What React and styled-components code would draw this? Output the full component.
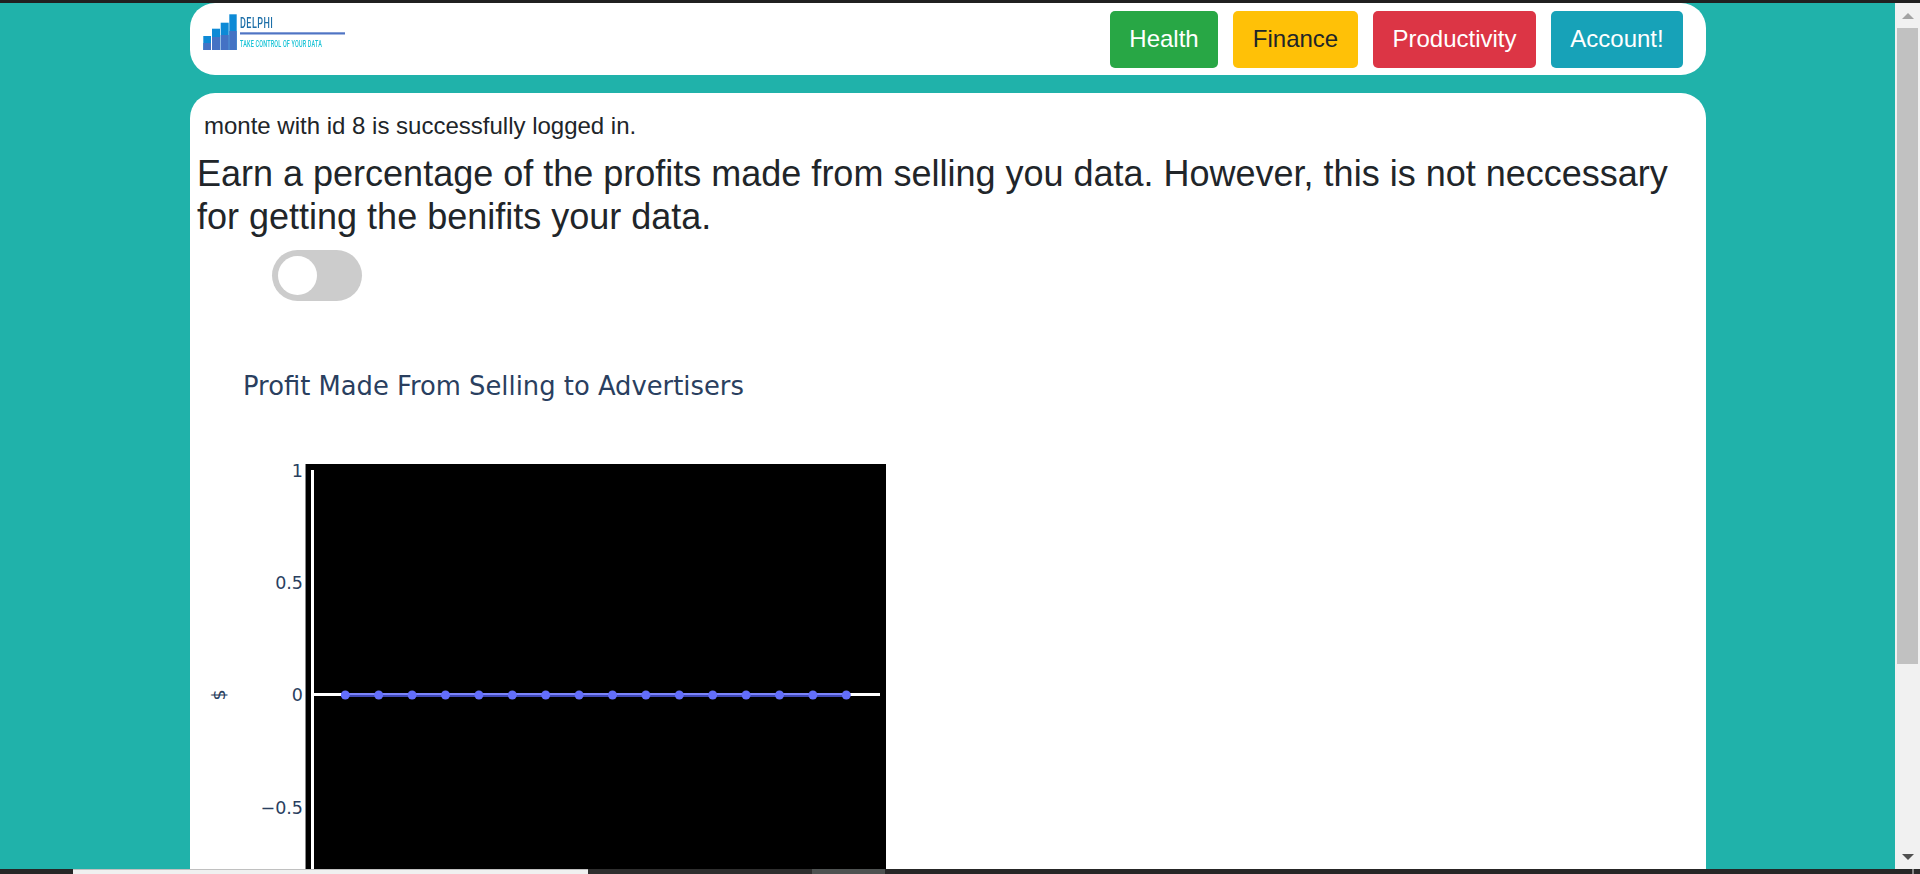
import React from "react";
import styled, { createGlobalStyle } from "styled-components";

const GlobalStyle = createGlobalStyle`
  html, body {
    margin: 0;
    height: 100%;
    overflow: hidden;
  }
  body {
    font-family: "Liberation Sans", Arial, sans-serif;
    color: #212529;
  }
`;

const Screen = styled.div`
  height: 874px;
  display: flex;
  flex-direction: column;
  background: #202020;
`;

const WindowRow = styled.div`
  flex: 1;
  min-height: 0;
  display: flex;
  margin-top: 3px;
`;

const Page = styled.main`
  flex: 1;
  min-width: 0;
  overflow: hidden;
  background: #20b2aa;
  padding: 0 189px 0 190px;
`;

const Navbar = styled.nav`
  height: 72px;
  background: #fff;
  border-radius: 25px;
  display: flex;
  align-items: flex-start;
  justify-content: space-between;
  padding: 8px 23px 0 13px;
  box-sizing: border-box;
`;

const Buttons = styled.div`
  display: flex;
  gap: 15px;
`;

const NavButton = styled.a`
  height: 57px;
  box-sizing: border-box;
  display: flex;
  align-items: center;
  justify-content: center;
  padding-bottom: 2px;
  width: ${(p) => p.$width}px;
  border-radius: 5px;
  font-size: 24px;
  line-height: 1;
  background: ${(p) => p.$bg};
  color: ${(p) => p.$fg || "#fff"};
`;

const Card = styled.section`
  margin-top: 18px;
  background: #fff;
  border-radius: 25px 25px 0 0;
  height: 900px;
  padding: 18px 6px 0 7px;
  box-sizing: border-box;
`;

const Status = styled.p`
  margin: 0 0 0 7px;
  font-size: 24px;
  line-height: 29px;
`;

const Heading = styled.h2`
  margin: 12px 0 0;
  font-size: 36px;
  font-weight: 400;
  line-height: 43px;
`;

const Toggle = styled.div`
  width: 90px;
  height: 51px;
  margin: 12px 0 0 75px;
  border-radius: 26px;
  background: #ccc;
  display: flex;
  align-items: center;
  padding-left: 6px;
  box-sizing: border-box;
`;

const Knob = styled.span`
  width: 39px;
  height: 39px;
  border-radius: 50%;
  background: #fff;
`;

const Chart = styled.svg`
  display: block;
  margin-left: -7px;
`;

const LogoArt = styled.svg`
  display: block;
  filter: blur(0.35px);
`;

const Scrollbar = styled.aside`
  width: 25px;
  background: #f1f1f1;
  display: flex;
  flex-direction: column;
  align-items: center;
`;

const Arrow = styled.span`
  width: 0;
  height: 0;
  border-left: 6px solid transparent;
  border-right: 6px solid transparent;
  ${(p) =>
    p.$up
      ? "border-bottom: 6px solid #a3a3a3; margin-top: 10px;"
      : "border-top: 6px solid #505050; margin-bottom: 9px;"}
`;

const Thumb = styled.div`
  width: 21px;
  height: 636px;
  margin-top: 9px;
  background: #c1c1c1;
`;

const Spacer = styled.div`
  flex: 1;
`;

const BottomBar = styled.div`
  height: 5px;
  display: flex;
  background: #2b2b2b;
`;

const BarPart = styled.div`
  width: ${(p) => p.$w}px;
  box-sizing: border-box;
  background: ${(p) => p.$bg};
  border-top: ${(p) => (p.$edge ? "1px solid #c0c0c0" : "none")};
`;

const CHART_TEXT = { fontFamily: '"DejaVu Sans", Verdana, sans-serif', fill: "#2a3f5f" };
const POINTS = Array.from({ length: 16 }, (_, i) => 155.3 + i * 33.4);

function Logo() {
  return (
    <LogoArt width="150" height="44" viewBox="0 0 150 44">
      <rect x="0.3" y="25" width="7.7" height="14" fill="#0d8ad6" />
      <rect x="9" y="17.7" width="8" height="21.3" fill="#0d8ad6" />
      <rect x="17.7" y="11.7" width="8" height="27.3" fill="#0d8ad6" />
      <rect x="26.3" y="3.3" width="7.4" height="35.7" fill="#0d8ad6" />
      <rect x="0.3" y="32" width="7.7" height="7" fill="#4472c4" />
      <rect x="9" y="26" width="8" height="13" fill="#4472c4" />
      <rect x="17.7" y="24" width="8" height="15" fill="#4472c4" />
      <rect x="26.3" y="20" width="7.4" height="19" fill="#4472c4" />
      <text transform="translate(37 17) scale(0.6 1)" fontFamily="Roboto, sans-serif" fontSize="15" fontWeight="500" letterSpacing="0.8" fill="#1d6fa8">DELPHI</text>
      <rect x="37" y="21.3" width="105" height="2.2" fill="#4f74c4" />
      <text transform="translate(37 36.3) scale(0.62 1)" fontFamily="Roboto, sans-serif" fontSize="8.8" fontWeight="500" letterSpacing="0.3" fill="#17c3d6">TAKE CONTROL OF YOUR DATA</text>
    </LogoArt>
  );
}

function ProfitChart() {
  return (
    <Chart width="900" height="640" viewBox="0 0 900 640">
      <text x="53" y="94" fontSize="25.8" style={CHART_TEXT}>Profit Made From Selling to Advertisers</text>
      <rect x="116" y="163" width="580" height="477" fill="#000" />
      <rect x="115" y="163" width="1" height="477" fill="#888" />
      <rect x="121" y="169" width="3" height="471" fill="#fff" />
      <rect x="124" y="392" width="566" height="3" fill="#fff" />
      <rect x={POINTS[0]} y="392" width={POINTS[15] - POINTS[0]} height="2" fill="#7b84fb" />
      <rect x={POINTS[0]} y="394" width={POINTS[15] - POINTS[0]} height="2" fill="#3f47b5" />
      {POINTS.map((x) => (
        <circle key={x} cx={x} cy="394" r="4.5" fill="#636efa" />
      ))}
      <g fontSize="17.5" textAnchor="end" style={CHART_TEXT}>
        <text x="113" y="176">1</text>
        <text x="113" y="288">0.5</text>
        <text x="113" y="400">0</text>
        <text x="113" y="513">−0.5</text>
      </g>
      <text transform="translate(30 394) rotate(-90)" fontSize="17.5" textAnchor="middle" dominantBaseline="middle" style={CHART_TEXT}>$</text>
    </Chart>
  );
}

export default function App() {
  return (
    <Screen>
      <GlobalStyle />
      <WindowRow>
        <Page>
          <Navbar>
            <Logo />
            <Buttons>
              <NavButton $bg="#28a745" $width={108}>Health</NavButton>
              <NavButton $bg="#ffc107" $fg="#212529" $width={125}>Finance</NavButton>
              <NavButton $bg="#dc3545" $width={163}>Productivity</NavButton>
              <NavButton $bg="#17a2b8" $width={132}>Account!</NavButton>
            </Buttons>
          </Navbar>
          <Card>
            <Status>monte with id 8 is successfully logged in.</Status>
            <Heading>Earn a percentage of the profits made from selling you data. However, this is not neccessary for getting the benifits your data.</Heading>
            <Toggle><Knob /></Toggle>
            <ProfitChart />
          </Card>
        </Page>
        <Scrollbar>
          <Arrow $up />
          <Thumb />
          <Spacer />
          <Arrow />
        </Scrollbar>
      </WindowRow>
      <BottomBar>
        <BarPart $w={73} $bg="#262626" />
        <BarPart $w={515} $bg="#f0f0f0" $edge />
        <BarPart $w={224} $bg="#2e2e2e" />
        <BarPart $w={73} $bg="#4e5251" />
        <BarPart $w={1027} $bg="#262626" />
        <BarPart $w={2} $bg="#888" />
      </BottomBar>
    </Screen>
  );
}
